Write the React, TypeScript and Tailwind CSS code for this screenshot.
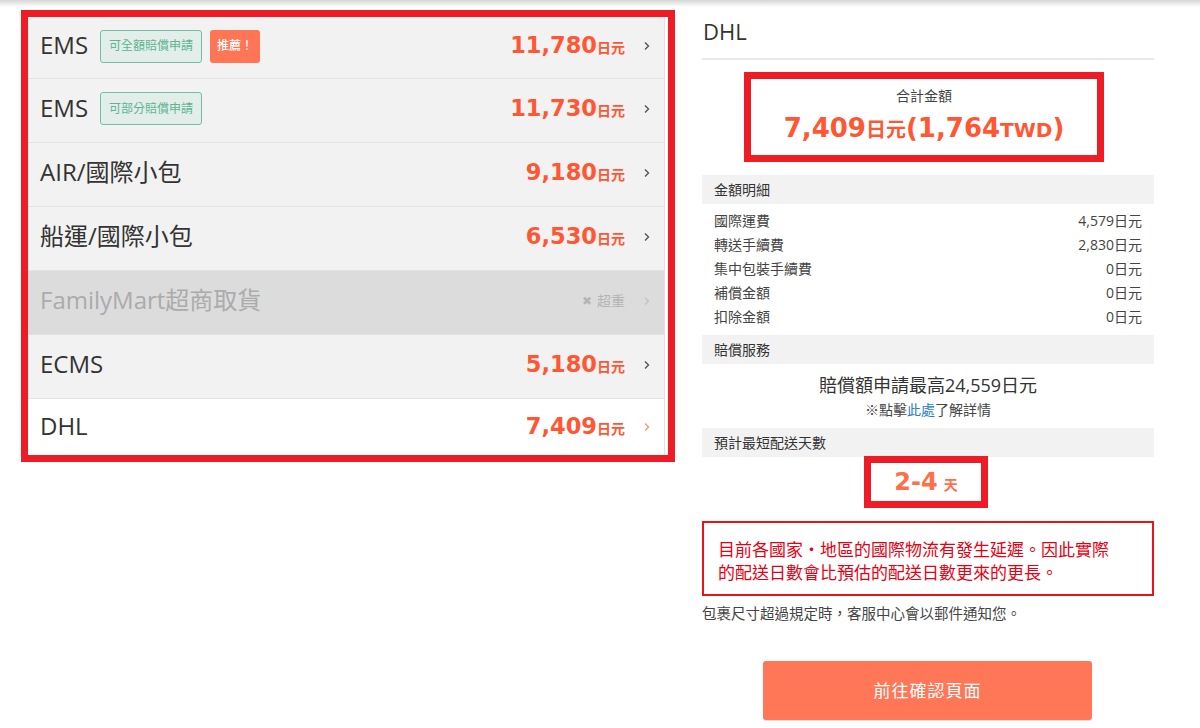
import React from "react";

type Row = {
  name: string;
  price?: string;
  badges?: { label: string; kind: "green" | "hot" }[];
  variant?: "normal" | "disabled" | "active";
};

const rows: Row[] = [
  {
    name: "EMS",
    price: "11,780",
    badges: [
      { label: "可全額賠償申請", kind: "green" },
      { label: "推薦！", kind: "hot" },
    ],
  },
  { name: "EMS", price: "11,730", badges: [{ label: "可部分賠償申請", kind: "green" }] },
  { name: "AIR/國際小包", price: "9,180" },
  { name: "船運/國際小包", price: "6,530" },
  { name: "FamilyMart超商取貨", variant: "disabled" },
  { name: "ECMS", price: "5,180" },
  { name: "DHL", price: "7,409", variant: "active" },
];

const details = [
  ["國際運費", "4,579日元"],
  ["轉送手續費", "2,830日元"],
  ["集中包裝手續費", "0日元"],
  ["補償金額", "0日元"],
  ["扣除金額", "0日元"],
];

function Chevron({ color }: { color: string }) {
  return (
    <svg width="6" height="10" viewBox="0 0 6 10" className="shrink-0">
      <polyline points="1,1.5 4.5,5 1,8.5" fill="none" stroke={color} strokeWidth="1.4" />
    </svg>
  );
}

function ShippingRow({ row, index }: { row: Row; index: number }) {
  const variant = row.variant ?? "normal";
  const bg =
    variant === "disabled" ? "bg-[#dcdcdc]" : variant === "active" ? "bg-white" : "bg-[#f2f2f2]";
  const height =
    index === 0 ? "h-[62px] pb-[3px]" : index === rows.length - 1 ? "h-[56px]" : "h-[64px] pb-[4px]";
  return (
    <div
      className={`flex items-center pl-[12px] pr-[14px] ${bg} ${height} ${
        index < rows.length - 1 ? "border-b border-[#e2e2e2]" : ""
      }`}
    >
      <span
        className={`text-[24px] leading-none mb-[2px] ${
          variant === "disabled" ? "text-[#ababab]" : "text-[#333]"
        }`}
      >
        {row.name}
      </span>
      {row.badges && (
        <div className="flex items-center gap-[8px] ml-[12px]">
          {row.badges.map((b) =>
            b.kind === "green" ? (
              <span
                key={b.label}
                className="h-[33px] px-[8px] flex items-center rounded-[3px] border border-[#6cc3a2] bg-[#e3eeea] text-[12px] text-[#5cb592]"
              >
                {b.label}
              </span>
            ) : (
              <span
                key={b.label}
                className="h-[33px] px-[7px] flex items-center rounded-[3px] bg-[#ff7556] text-[12px] font-medium text-white"
              >
                {b.label}
              </span>
            )
          )}
        </div>
      )}
      <div className="ml-auto flex items-baseline">
        {variant === "disabled" ? (
          <span className="flex items-center gap-[5px] text-[14px] text-[#b4b4b4]">
            <span className="text-[12px]">✖</span>超重
          </span>
        ) : (
          <span className="font-['DejaVu_Sans','Noto_Sans_CJK_TC',sans-serif] font-bold text-[#ff5733]">
            <span className="text-[22.5px]">{row.price}</span>
            <span className="text-[14px]">日元</span>
          </span>
        )}
      </div>
      <div className="ml-[19px]">
        <Chevron
          color={variant === "disabled" ? "#c4c4c4" : variant === "active" ? "#f39a80" : "#555"}
        />
      </div>
    </div>
  );
}

function SectionHeader({ title }: { title: string }) {
  return (
    <div className="h-[29px] bg-[#f2f2f2] pl-[12px] flex items-center text-[14px] text-[#333]">
      {title}
    </div>
  );
}

export default function App() {
  return (
    <div className="w-[1200px] h-[728px] bg-white overflow-hidden font-['Open_Sans','Noto_Sans_CJK_TC',sans-serif]">
      <div className="h-[7px] bg-gradient-to-b from-[#d6d6d6] to-white" />
      <div className="flex pl-[21px]">
        {/* shipping methods list */}
        <div className="w-[654px] mt-[3px] self-start border-[7px] border-[#ee1c24] bg-white pr-[3px]">
          <div className="border-r border-[#e2e2e2]">
            {rows.map((r, i) => (
              <ShippingRow key={r.name + i} row={r} index={i} />
            ))}
          </div>
        </div>

        {/* summary panel */}
        <div className="ml-[27px] w-[452px] flex flex-col">
          <div className="h-[53px] flex items-center pb-[2px] border-b-2 border-[#e8e8e8] text-[22px] text-[#333] pl-[1px]">
            DHL
          </div>

          <div className="mt-[12px] ml-[42px] w-[360px] h-[90px] border-[7px] border-[#ee1c24] flex flex-col items-center">
            <div className="mt-[7px] text-[14px] leading-[20px] text-[#444]">合計金額</div>
            <div className="mt-[6px] leading-[32px] font-['DejaVu_Sans','Noto_Sans_CJK_TC',sans-serif] font-bold text-[#ff5733] whitespace-nowrap">
              <span className="text-[26px]">7,409</span>
              <span className="text-[20px]">日元</span>
              <span className="text-[26px]">(1,764</span>
              <span className="text-[20px]">TWD</span>
              <span className="text-[26px]">)</span>
            </div>
          </div>

          <div className="mt-[13px]">
            <SectionHeader title="金額明細" />
          </div>
          <div className="pt-[4px] pb-[7px] px-[12px]">
            {details.map(([k, v]) => (
              <div key={k} className="h-[24px] flex items-center justify-between text-[14px] text-[#444]">
                <span>{k}</span>
                <span>{v}</span>
              </div>
            ))}
          </div>

          <SectionHeader title="賠償服務" />
          <div className="pt-[8px] pb-[8px] flex flex-col items-center">
            <div className="h-[26px] flex items-center text-[18px] text-[#333]">賠償額申請最高24,559日元</div>
            <div className="h-[22px] flex items-center text-[14px] text-[#444]">
              ※點擊<span className="text-[#2b7ec3]">此處</span>了解詳情
            </div>
          </div>

          <SectionHeader title="預計最短配送天數" />
          <div className="ml-[162px] -mt-[1px] w-[124px] h-[52px] border-[7px] border-[#ee1c24] flex items-center justify-center">
            <span className="font-['DejaVu_Sans','Noto_Sans_CJK_TC',sans-serif] font-bold text-[#ff7048] whitespace-nowrap">
              <span className="text-[24px]">2-4</span>
              <span className="text-[14px] ml-[6px]">天</span>
            </span>
          </div>

          <div className="mt-[13px] h-[75px] border-2 border-[#e8141c] pl-[14px] pt-[14px] text-[17px] leading-[23px] text-[#e60012] font-['Noto_Sans_CJK_TC',sans-serif]">
            <div className="whitespace-nowrap">目前各國家・地區的國際物流有發生延遲。因此實際</div>
            <div className="whitespace-nowrap">的配送日數會比預估的配送日數更來的更長。</div>
          </div>

          <div className="mt-[8px] h-[20px] flex items-center text-[14.5px] text-[#444] whitespace-nowrap">
            包裹尺寸超過規定時，客服中心會以郵件通知您。
          </div>

          <button className="mt-[37px] ml-[61px] w-[329px] h-[59px] rounded-[3px] bg-[#ff7757] text-white text-[17px] tracking-[1px] shadow-[0_1px_1px_rgba(0,0,0,0.15)]">
            前往確認頁面
          </button>
        </div>
      </div>
    </div>
  );
}
